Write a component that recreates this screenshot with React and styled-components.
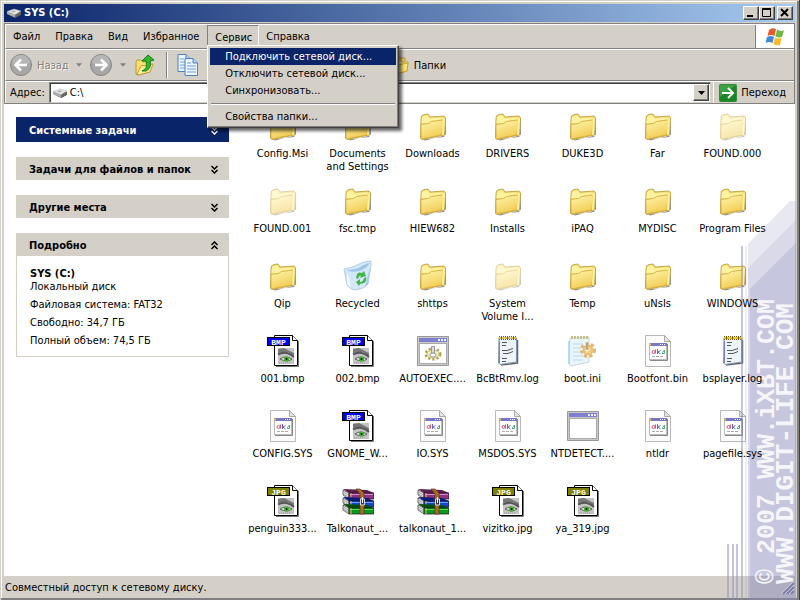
import React, { useState } from 'react'
import styled, { createGlobalStyle, css } from 'styled-components'

const GlobalStyle = createGlobalStyle`
  * {
    box-sizing: border-box;
  }
  body {
    margin: 0;
    background: #d4d0c8;
    color: #000;
    font: 11px/13px 'DejaVu Sans Condensed', Tahoma, 'DejaVu Sans', sans-serif;
  }
  button, input {
    font: inherit;
    color: inherit;
    border: 0;
    padding: 0;
    margin: 0;
    background: none;
  }
  ul {
    list-style: none;
    margin: 0;
    padding: 0;
  }
  svg {
    display: block;
    flex: none;
  }
`

const raised = css`
  border: 1px solid;
  border-color: #fff #404040 #404040 #fff;
  box-shadow: inset -1px -1px #808080;
`

const Window = styled.div`
  position: relative;
  display: flex;
  flex-direction: column;
  min-height: 100vh;
  background: #d4d0c8;
  padding: 4px 5px 4px 4px;
  box-shadow: inset -1px -1px #404040, inset 1px 1px #d4d0c8,
    inset -3px -3px #808080, inset 2px 2px #fff;
`

const TitleBar = styled.header`
  display: flex;
  align-items: center;
  height: 18px;
  padding: 0 2px;
  gap: 2px;
  color: #fff;
  background: linear-gradient(90deg, #0a246a, #a6caf0);
`

const Title = styled.h1`
  flex: 1;
  margin: 0;
  font-size: 11px;
  line-height: 18px;
  font-weight: bold;
`

const WindowButtons = styled.div`
  display: flex;
`

const WindowButton = styled.button`
  ${raised}
  width: 16px;
  height: 14px;
  background: #d4d0c8;
  margin-left: ${({ $apart }) => ($apart ? '2px' : '0')};
`

const Bars = styled.div`
  margin-top: 1px;
  border: 1px solid #808080;
`

const Bar = styled.div`
  display: flex;
  align-items: center;
  height: ${({ $height }) => $height}px;
  border-top: 1px solid #fff;
  border-left: 1px solid #fff;
  border-bottom: ${({ $last }) => ($last ? '0' : '1px solid #808080')};
`

const MenuList = styled.ul`
  display: flex;
  flex: 1;
  align-self: stretch;
`

const MenuItem = styled.li`
  position: relative;
  display: flex;
`

const MenuButton = styled.button`
  padding: 0 7px 0 6px;
  border: 1px solid transparent;
  ${({ $open }) =>
    $open &&
    css`
      border-color: #808080 #fff #fff #808080;
      padding: 2px 6px 0 7px;
    `}
`

const Popup = styled.ul`
  position: absolute;
  z-index: 2;
  top: 20px;
  left: 0;
  width: 192px;
  padding: 2px;
  background: #d4d0c8;
  ${raised}
  box-shadow: inset -1px -1px #808080, 3px 3px 3px rgba(0, 0, 0, 0.6);
`

const PopupButton = styled.button`
  display: block;
  width: 100%;
  height: 17px;
  padding: 0 15px;
  text-align: left;
  white-space: nowrap;
  color: ${({ $active }) => ($active ? '#fff' : '#000')};
  background: ${({ $active }) => ($active ? '#0a246a' : 'transparent')};
`

const Divider = styled.li`
  height: 2px;
  margin: 4px 1px 3px;
  border-top: 1px solid #808080;
  border-bottom: 1px solid #fff;
`

const FlagBox = styled.div`
  display: flex;
  align-items: center;
  justify-content: center;
  align-self: stretch;
  width: 39px;
  background: #fff;
  border-left: 1px solid #808080;
`

const ToolButton = styled.button`
  display: flex;
  align-items: center;
  gap: 4px;
  padding: 0 4px 0 3px;
  color: ${({ disabled }) => (disabled ? '#808080' : '#000')};
  text-shadow: ${({ disabled }) => (disabled ? '1px 1px #fff' : 'none')};
`

const ToolSeparator = styled.span`
  width: 2px;
  height: 26px;
  margin: 0 5px;
  border-left: 1px solid #808080;
  border-right: 1px solid #fff;
`

const ToolGroup = styled.div`
  display: flex;
  flex: 0 0 ${({ $width }) => $width}px;
`

const AddressLabel = styled.label`
  padding: 0 4px;
`

const AddressBox = styled.div`
  display: flex;
  align-items: center;
  flex: 1;
  height: 21px;
  padding: 1px 1px 1px 2px;
  gap: 2px;
  background: #fff;
  border: 1px solid;
  border-color: #808080 #d4d0c8 #d4d0c8 #808080;
  box-shadow: inset 1px 1px #404040;
`

const AddressInput = styled.input`
  flex: 1;
  min-width: 0;
  height: 16px;
  outline: 0;
`

const DropButton = styled.button`
  ${raised}
  display: flex;
  align-items: center;
  justify-content: center;
  width: 16px;
  height: 17px;
  background: #d4d0c8;
`

const GoButton = styled.button`
  display: flex;
  align-items: center;
  gap: 4px;
  align-self: stretch;
  margin-left: 2px;
  padding: 0 8px 0 5px;
  border-left: 1px solid #fff;
`

const Body = styled.div`
  display: flex;
  flex: 1;
  background: #fff;
`

const Sidebar = styled.aside`
  flex: none;
  width: 241px;
  padding: 13px 16px 0 12px;
`

const Panel = styled.section`
  margin-bottom: 15px;
`

const PanelHeader = styled.button`
  display: flex;
  align-items: center;
  justify-content: space-between;
  width: 100%;
  height: ${({ $primary }) => ($primary ? 25 : 23)}px;
  padding: 2px 10px 0 13px;
  font-weight: bold;
  color: ${({ $primary }) => ($primary ? '#fff' : '#000')};
  background: ${({ $primary }) => ($primary ? '#0a246a' : '#d4d0c8')};
`

const PanelBody = styled.div`
  padding: 11px 12px 4px 13px;
  border: 1px solid #d4d0c8;
  border-top: 0;
`

const DetailTitle = styled.h2`
  margin: 0;
  font-size: 11px;
  line-height: 13px;
`

const Detail = styled.p`
  margin: 0 0 5px;
`

const FileGrid = styled.ul`
  flex: 1;
  display: grid;
  grid-template-columns: repeat(auto-fill, 75px);
  grid-auto-rows: 75px;
  align-content: start;
  padding: 6px 0 16px;
`

const File = styled.li`
  display: flex;
  justify-content: center;
`

const FileButton = styled.button`
  display: flex;
  flex-direction: column;
  align-items: center;
  gap: 5px;
  width: 75px;
  height: 75px;
`

const FileName = styled.span`
  position: relative;
  z-index: 2;
  max-width: 72px;
`

const FileIcon = styled.span`
  opacity: ${({ $hidden }) => ($hidden ? 0.5 : 1)};
`

const StatusBar = styled.footer`
  display: flex;
  align-items: center;
  justify-content: space-between;
  height: 21px;
  padding: 2px 0 0 1px;
`

const Watermark = styled.div`
  position: absolute;
  z-index: 1;
  right: 0;
  bottom: 0;
  width: 74px;
  height: 400px;
  pointer-events: none;
`

const FolderIcon = () => (
  <svg width="32" height="32" viewBox="0 0 32 32">
    <defs>
      <linearGradient id="folder" x1="0" y1="0" x2="0.4" y2="1">
        <stop offset="0" stopColor="#fff8b0" />
        <stop offset="1" stopColor="#f3cc55" />
      </linearGradient>
    </defs>
    <path d="M6 29.500L27 27 29 24V9L28.500 8 28 25.500 8 30.500z" fill="#555" opacity=".7" />
    <path d="M4 9L4.500 6 7 4.500 11 4 13 7 27 6 28.500 8 27.500 25 5 29.500 3.500 28z" fill="#f7dd70" stroke="#b8932f" strokeWidth=".8" />
    <path d="M5 7L8 5.500 11 5.500 12 8.500 25 7.500 26 9 15 11 12 13 4.500 13z" fill="#fff3a2" />
    <path d="M4 14.500L11.500 13.500 14.500 11.500 26 10 25 25 4 29z" fill="url(#folder)" stroke="#d0aa3a" strokeWidth=".8" />
    <path d="M25.500 9L28 7.500 27 24.500 25 25z" fill="#fff09b" />
  </svg>
)

const RecycleIcon = () => (
  <svg width="32" height="32" viewBox="0 0 32 32">
    <path d="M2 9Q10 8 17 4 23 1 29 1L29 5 26 24Q22 29 14 30L9 29 5 25z" fill="#d3e8f8" stroke="#b6cfe6" />
    <path d="M4 10Q14 10 20 6 25 3 28 3 24 9 17 11 9 13 4 10z" fill="#9fc5ea" />
    <path d="M5 13Q9 20 8 27L5 24z" fill="#fff" opacity=".7" />
    <path d="M28 7L26 24 23 27Q25 18 28 7z" fill="#a9c7e4" />
    <path
      d="M14 18Q15 11 20 13L22 11 24 16 18 18 19 16Q17 15 16 19z M24 17Q25 21 22 23L18 24 17 26 14 22 18 19V22Q21 22 22 18z"
      fill="#43b64b"
    />
  </svg>
)

const PictureIcon = ({ type }) => (
  <svg width="32" height="32" viewBox="0 0 32 32">
    <path d="M9 31.500H31.500V6" fill="none" stroke="#777" />
    <path d="M7.500 .5H25.500L30.500 5.500V30.500H7.500z" fill="#fff" stroke="#000" />
    <path d="M25.500 .5V5.500H30.500" fill="#fff" stroke="#000" />
    <rect x="11" y="13" width="16" height="16" fill="#c4c4c4" />
    <path d="M11 14L17 13 27 18V22L21 17 11 18z" fill="#777" />
    <path d="M11 19.500Q19 15 27 22" fill="none" stroke="#555" strokeWidth="2" />
    <path d="M13 24Q18 20 25 24 20 28 13 24z" fill="#ddd" stroke="#444" strokeWidth=".8" />
    <circle cx="19.500" cy="24" r="2.500" fill="#2fbd14" />
    <circle cx="19.500" cy="24" r="1" fill="#000" />
    <path d="M12 28H24" stroke="#999" strokeDasharray="1 1" />
    <rect x=".5" y="2.500" width="22" height="8" fill={type === 'BMP' ? '#0000f0' : '#808000'} stroke="#000" />
    <text x="11.500" y="9.500" textAnchor="middle" fill="#fff" fontSize="8" fontWeight="bold" fontFamily="Liberation Mono, monospace">
      {type}
    </text>
  </svg>
)

const SystemIcon = () => (
  <svg width="32" height="32" viewBox="0 0 32 32">
    <path d="M3.500 .5H22.500L28.500 6.500V31.500H3.500z" fill="#fbfbfb" stroke="#b9b9b5" />
    <path d="M22.500 .5V6.500H28.500z" fill="#e4e4e4" stroke="#aaa" />
    <path d="M8 25.500H25.500V9" fill="none" stroke="#888" />
    <rect x="7.500" y="8.500" width="17" height="16" fill="#fff" stroke="#bbb" />
    <path d="M7 9.500H25" stroke="#7777c9" strokeWidth="3" />
    <path d="M7 9.500H9" stroke="#e9cf48" strokeWidth="2" />
    <path d="M18 9.500H24" stroke="#fff" strokeDasharray="1 1" />
    <circle cx="11.500" cy="17" r="1.500" fill="none" stroke="#d65a70" />
    <path d="M13.500 14.500V18.500" stroke="#d65a70" />
    <path d="M15.500 14V19M18.500 15.500L16 17 18.500 19" fill="none" stroke="#6565c5" />
    <path d="M20.500 18.500V17.500L22.500 15V18.500H20" fill="none" stroke="#50b078" />
    <path d="M10 21.500H22" stroke="#aaa" strokeDasharray="3 1" />
  </svg>
)

const ProgramIcon = ({ gear }) => (
  <svg width="32" height="32" viewBox="0 0 32 32">
    <path d="M.5 1.500H31.500V30.500H.5z" fill="#c8c8c8" stroke="#999" />
    <rect x="2" y="3" width="28" height="4" fill="#7f7fd0" />
    <path d="M21 5H29" stroke="#eee" strokeWidth="2" strokeDasharray="2 1" />
    <rect x="2.500" y="8.500" width="27" height="20" fill="#fff" stroke="#aaa" />
    {gear && (
      <g>
        <ellipse cx="16" cy="19" rx="7" ry="5" fill="#f2ecb4" stroke="#a69d54" strokeWidth="3" strokeDasharray="2 2" />
        <ellipse cx="16" cy="19" rx="6" ry="4" fill="#f4efc0" stroke="#cfc572" />
        <ellipse cx="16" cy="20" rx="3" ry="2" fill="#fff" stroke="#999" />
        <path d="M14.500 11.500H17.500V18H14.500z" fill="#ddd" stroke="#999" />
      </g>
    )}
  </svg>
)

const NotepadIcon = ({ gear }) => (
  <svg width="32" height="32" viewBox="0 0 32 32">
    {gear ? (
      <g>
        <path d="M3 3L22 2V27L4 31 2 29z" fill="#eaf6fd" stroke="#c7d9e2" />
        <path d="M4 2.500H22" stroke="#c7bf86" strokeWidth="3" strokeDasharray="2 1" />
        <path d="M6 9H16M6 13H14M6 17H14M6 21H16M6 25H16" stroke="#bcd6ea" />
        <path d="M2 6V29" stroke="#a5d4ee" strokeWidth="1.500" />
        <circle cx="21" cy="15" r="6.500" fill="none" stroke="#e3b56a" strokeWidth="3" strokeDasharray="3 2.500" />
        <circle cx="21" cy="15" r="4.500" fill="#f6cf86" stroke="#eabf77" strokeWidth="2" />
        <circle cx="20" cy="15" r="1.500" fill="#fff" />
        <path d="M20 8V15" stroke="#999" strokeWidth="1.500" />
      </g>
    ) : (
      <g>
        <path d="M9 30L25.500 28V5" fill="none" stroke="#666" strokeWidth="1.500" />
        <path d="M7 3H24.500V27L8 29.500 6.500 28z" fill="#edf4fa" stroke="#7f91ad" />
        <path d="M7 3H25" stroke="#6c5a20" strokeWidth="4" strokeDasharray="1 1" />
        <path d="M7 3H25" stroke="#e8bd20" strokeWidth="2" strokeDasharray="2 1" />
        <path d="M10 7.500H15M10 10.500H14M10 15.500H15L21 13.500M11 18.500H16L21 16.500M10 23.500H15M10 26.500H14" fill="none" stroke="#555" />
        <path d="M7.500 6V28" stroke="#7f7fc5" />
      </g>
    )}
  </svg>
)

const books = [
  { y: 4, dark: '#5d1f50', main: '#8d3380', light: '#d787c9' },
  { y: 12, dark: '#071d77', main: '#1746c9', light: '#66a0ff' },
  { y: 19, dark: '#04500f', main: '#0b9820', light: '#52dd4d' },
]

const ArchiveIcon = () => (
  <svg width="32" height="32" viewBox="0 0 32 32">
    {books.map(({ y, dark, main, light }) => (
      <g key={y} transform={`translate(0 ${y})`}>
        <path d="M1 1L7 4V10L1 6z" fill="#e8e8e8" stroke="#333" strokeWidth=".7" />
        <path d="M1 3L7 6M1 5L7 8" stroke="#888" strokeWidth=".7" />
        <path d="M1 0L25 1 32 4H7z" fill={dark} />
        <path d="M7 4H32V10H7z" fill={main} stroke="#201020" strokeWidth=".7" />
        <path d="M8 5.500H31" stroke={light} />
        <path d="M9 4V10" stroke="#e5be58" />
      </g>
    ))}
    <path d="M14 4L18 4 22 8V29H18V9z" fill="#aa6b2a" stroke="#60350e" strokeWidth=".7" />
    <path d="M18.500 14H22.500V20H18.500z" fill="#333" stroke="#ddd" />
    <path d="M20.500 12V18" stroke="#fff" />
  </svg>
)

const DriveIcon = () => (
  <svg width="16" height="16" viewBox="0 0 16 16">
    <path d="M1 7V9L9 13 15 10V7z" fill="#555" />
    <path d="M1 6.500L8 4 15 6 9 10z" fill="#e6e6e6" stroke="#aaa" strokeWidth=".5" />
    <path d="M1 6.500L9 10V12.500L1 9z" fill="#b0b0b0" />
    <path d="M9 10L15 6.500V9.500L9 12.500z" fill="#666" />
    <path d="M5 6.500L8 5.500 10 6.300 7.500 7.500z" fill="#aaa" />
  </svg>
)

const NavIcon = ({ forward }) => (
  <svg width="24" height="24" viewBox="0 0 24 24">
    <circle cx="12" cy="12" r="10.500" fill="#a7a7a7" stroke="#858585" />
    <path d="M3 10A9 8 0 0 1 21 10Q12 14 3 10z" fill="#b6b6b6" />
    <path
      d={forward ? 'M6 12H17M12 6.500L17.500 12 12 17.500' : 'M18 12H7M12 6.500L6.500 12 12 17.500'}
      fill="none"
      stroke="#fff"
      strokeWidth="2.500"
    />
  </svg>
)

const Caret = ({ color = '#000', width = 7 }) => (
  <svg width={width} height="4" viewBox="0 0 7 4">
    <path d="M0 0H7L3.500 4z" fill={color} />
  </svg>
)

const UpIcon = () => (
  <svg width="24" height="24" viewBox="0 0 24 24">
    <path d="M3 9L4 7H8L10 9 17 8V19L5 22 3 21z" fill="#f8df70" stroke="#be9630" />
    <path d="M4 21L8 13 20 11 17 19 5 22z" fill="#fff0a0" stroke="#c49c2d" />
    <path d="M9 18Q15 16 13 8H9L15 2 21 7 17 8Q19 15 13 18z" fill="#33b52f" stroke="#167c17" />
  </svg>
)

const CopyIcon = () => (
  <svg width="24" height="24" viewBox="0 0 24 24">
    {[0, 1].map((i) => (
      <g key={i} transform={`translate(${i * 7} ${i * 4})`}>
        <path d="M2 1.500H10L14.500 6V18.500H2z" fill="#edf5ff" stroke="#4c7fc4" />
        <path d="M10 1.500V6H14.500" fill="#b5d2f6" stroke="#4c7fc4" />
        <path d="M4 6H8M4 9H13M4 12H13M4 15H13" stroke="#70a2dc" />
      </g>
    ))}
  </svg>
)

const FoldersIcon = () => (
  <svg width="24" height="24" viewBox="0 0 24 24">
    <path d="M6 4L8 3H12L14 5H19V15L7 17z" fill="#f5d75e" stroke="#b99533" />
    <path d="M9 10L11 7H15L16 9H22L21 18 10 21z" fill="#fff29e" stroke="#c6a233" />
    <path d="M11 12L22 10 21 18 10 21z" fill="#fbe577" stroke="#c6a233" />
  </svg>
)

const FlagIcon = () => (
  <svg width="22" height="20" viewBox="0 0 22 20">
    <path d="M5 3Q8 0 12 2L10.500 9Q7 7 3.500 9z" fill="#e65b2b" />
    <path d="M13 2.500Q17 5 20 3L18 10Q15 11 11.500 9.500z" fill="#72b944" />
    <path d="M3 10Q7 8 10 10L8.500 16Q5 14 1.500 16z" fill="#4387dc" />
    <path d="M11 10.500Q14 12 17.500 11L16 18Q12 19 9.500 17z" fill="#f4bd28" />
  </svg>
)

const GoIcon = () => (
  <svg width="18" height="18" viewBox="0 0 18 18">
    <rect x=".5" y=".5" width="17" height="17" rx="1" fill="#1c8526" stroke="#348a39" />
    <path d="M1 1H17L1 13z" fill="#51b553" opacity=".6" />
    <path d="M3 9H14M9 4L14 9 9 14" fill="none" stroke="#fff" strokeWidth="2" />
  </svg>
)

const Chevrons = ({ up }) => (
  <svg width="9" height="9" viewBox="0 0 9 9">
    <path
      d={up ? 'M1.500 4L4.500 1 7.500 4M1.500 8L4.500 5 7.500 8' : 'M1.500 1L4.500 4 7.500 1M1.500 5L4.500 8 7.500 5'}
      fill="none"
      stroke="currentColor"
      strokeWidth="1.500"
    />
  </svg>
)

const windowButtons = [
  { label: 'Свернуть', path: 'M3 9H9' },
  { label: 'Развернуть', path: 'M2.500 2V9.500H10.500V2M2 2H11' },
  { label: 'Закрыть', path: 'M3 2L10 9M10 2L3 9' },
]

const menus = ['Файл', 'Правка', 'Вид', 'Избранное', 'Сервис', 'Справка']

const commands = ['Подключить сетевой диск...', 'Отключить сетевой диск...', 'Синхронизовать...']

const icons = {
  folder: <FolderIcon />,
  recycle: <RecycleIcon />,
  bmp: <PictureIcon type="BMP" />,
  jpg: <PictureIcon type="JPG" />,
  sys: <SystemIcon />,
  bat: <ProgramIcon gear />,
  com: <ProgramIcon />,
  log: <NotepadIcon />,
  ini: <NotepadIcon gear />,
  rar: <ArchiveIcon />,
}

const files = [
  ['Config.Msi', 'folder'],
  ['Documents and Settings', 'folder'],
  ['Downloads', 'folder'],
  ['DRIVERS', 'folder'],
  ['DUKE3D', 'folder'],
  ['Far', 'folder'],
  ['FOUND.000', 'folder', true],
  ['FOUND.001', 'folder', true],
  ['fsc.tmp', 'folder'],
  ['HIEW682', 'folder'],
  ['Installs', 'folder'],
  ['iPAQ', 'folder'],
  ['MYDISC', 'folder'],
  ['Program Files', 'folder'],
  ['Qip', 'folder'],
  ['Recycled', 'recycle'],
  ['shttps', 'folder'],
  ['System Volume I...', 'folder', true],
  ['Temp', 'folder'],
  ['uNsIs', 'folder'],
  ['WINDOWS', 'folder'],
  ['001.bmp', 'bmp'],
  ['002.bmp', 'bmp'],
  ['AUTOEXEC....', 'bat'],
  ['BcBtRmv.log', 'log'],
  ['boot.ini', 'ini'],
  ['Bootfont.bin', 'sys'],
  ['bsplayer.log', 'log'],
  ['CONFIG.SYS', 'sys'],
  ['GNOME_W...', 'bmp'],
  ['IO.SYS', 'sys'],
  ['MSDOS.SYS', 'sys'],
  ['NTDETECT....', 'com'],
  ['ntldr', 'sys'],
  ['pagefile.sys', 'sys'],
  ['penguin333...', 'jpg'],
  ['Talkonaut_...', 'rar'],
  ['talkonaut_1...', 'rar'],
  ['vizitko.jpg', 'jpg'],
  ['ya_319.jpg', 'jpg'],
]

function ToolsMenu() {
  return (
    <Popup>
      {commands.map((command, i) => (
        <li key={command}>
          <PopupButton $active={i === 0}>{command}</PopupButton>
        </li>
      ))}
      <Divider />
      <li>
        <PopupButton>Свойства папки...</PopupButton>
      </li>
    </Popup>
  )
}

function Brand() {
  return (
    <Watermark>
      <svg width="74" height="400" viewBox="0 0 74 400">
        <g fill="#8c8cbc">
          <path d="M22 43L64 0H70V400H22z" opacity=".2" />
          <path d="M22 67L70 19V400H22z" opacity=".17" />
          <path d="M24 88L70 42V400H24z" opacity=".24" />
          <path d="M15 45H17V400H15zM1 343H3V400H1zM6 343H8V400H6zM10 343H12V400H10z" opacity=".5" />
          <path d="M19 45H21V400H19z" opacity=".15" />
        </g>
        <g fill="#fff" opacity=".85" fontFamily="Liberation Mono, monospace" fontWeight="bold">
          <text transform="translate(48 383) rotate(-90)" fontSize="25">
            © 2007 WWW.iXBT.COM
          </text>
          <text transform="translate(67 383) rotate(-90)" fontSize="26">
            WWW.DIGIT-LIFE.COM
          </text>
        </g>
      </svg>
    </Watermark>
  )
}

function App() {
  const [open, setOpen] = useState('Сервис')
  const [address, setAddress] = useState('C:\\')

  return (
    <Window>
      <GlobalStyle />
      <TitleBar>
        <DriveIcon />
        <Title>SYS (C:)</Title>
        <WindowButtons>
          {windowButtons.map(({ label, path }, i) => (
            <WindowButton key={label} aria-label={label} $apart={i === 2}>
              <svg width="14" height="12" viewBox="0 0 14 12">
                <path d={path} fill="none" stroke="#000" strokeWidth={i === 1 ? 1 : 2} />
                {i === 1 && <path d="M2 2H11" stroke="#000" strokeWidth="2" />}
              </svg>
            </WindowButton>
          ))}
        </WindowButtons>
      </TitleBar>
      <Bars>
        <Bar $height={25}>
          <MenuList>
            {menus.map((menu) => (
              <MenuItem key={menu}>
                <MenuButton $open={menu === open} onClick={() => setOpen(menu === open ? '' : menu)}>
                  {menu}
                </MenuButton>
                {menu === 'Сервис' && open === menu && <ToolsMenu />}
              </MenuItem>
            ))}
          </MenuList>
          <FlagBox>
            <FlagIcon />
          </FlagBox>
        </Bar>
        <Bar $height={32}>
          <ToolButton disabled>
            <NavIcon />
            Назад
          </ToolButton>
          <ToolButton disabled aria-label="Журнал назад">
            <Caret color="#808080" width={6} />
          </ToolButton>
          <ToolButton disabled aria-label="Вперед">
            <NavIcon forward />
          </ToolButton>
          <ToolButton disabled aria-label="Журнал вперед">
            <Caret color="#808080" width={6} />
          </ToolButton>
          <ToolButton aria-label="Вверх">
            <UpIcon />
          </ToolButton>
          <ToolSeparator />
          <ToolGroup $width={210}>
            <ToolButton aria-label="Копировать в">
              <CopyIcon />
            </ToolButton>
          </ToolGroup>
          <ToolButton>
            <FoldersIcon />
            Папки
          </ToolButton>
        </Bar>
        <Bar $height={22} $last>
          <AddressLabel htmlFor="address">Адрес:</AddressLabel>
          <AddressBox>
            <DriveIcon />
            <AddressInput id="address" value={address} onChange={(e) => setAddress(e.target.value)} />
            <DropButton aria-label="Список адресов">
              <Caret />
            </DropButton>
          </AddressBox>
          <GoButton>
            <GoIcon />
            Переход
          </GoButton>
        </Bar>
      </Bars>
      <Body>
        <Sidebar>
          <Panel>
            <PanelHeader $primary>
              Системные задачи
              <Chevrons />
            </PanelHeader>
          </Panel>
          <Panel>
            <PanelHeader>
              Задачи для файлов и папок
              <Chevrons />
            </PanelHeader>
          </Panel>
          <Panel>
            <PanelHeader>
              Другие места
              <Chevrons />
            </PanelHeader>
          </Panel>
          <Panel>
            <PanelHeader>
              Подробно
              <Chevrons up />
            </PanelHeader>
            <PanelBody>
              <DetailTitle>SYS (C:)</DetailTitle>
              <Detail>Локальный диск</Detail>
              <Detail>Файловая система: FAT32</Detail>
              <Detail>Свободно: 34,7 ГБ</Detail>
              <Detail>Полный объем: 74,5 ГБ</Detail>
            </PanelBody>
          </Panel>
        </Sidebar>
        <FileGrid>
          {files.map(([name, icon, hidden]) => (
            <File key={name}>
              <FileButton>
                <FileIcon $hidden={hidden}>{icons[icon]}</FileIcon>
                <FileName>{name}</FileName>
              </FileButton>
            </File>
          ))}
        </FileGrid>
      </Body>
      <StatusBar>
        Совместный доступ к сетевому диску.
        <svg width="14" height="14" viewBox="0 0 14 14">
          <path d="M2 13L13 2M6 13L13 6M10 13L13 10" stroke="#737390" strokeWidth="2" />
          <path d="M0 13L13 0M4 13L13 4M8 13L13 8" stroke="#fff" />
        </svg>
      </StatusBar>
      <Brand />
    </Window>
  )
}

export default App
